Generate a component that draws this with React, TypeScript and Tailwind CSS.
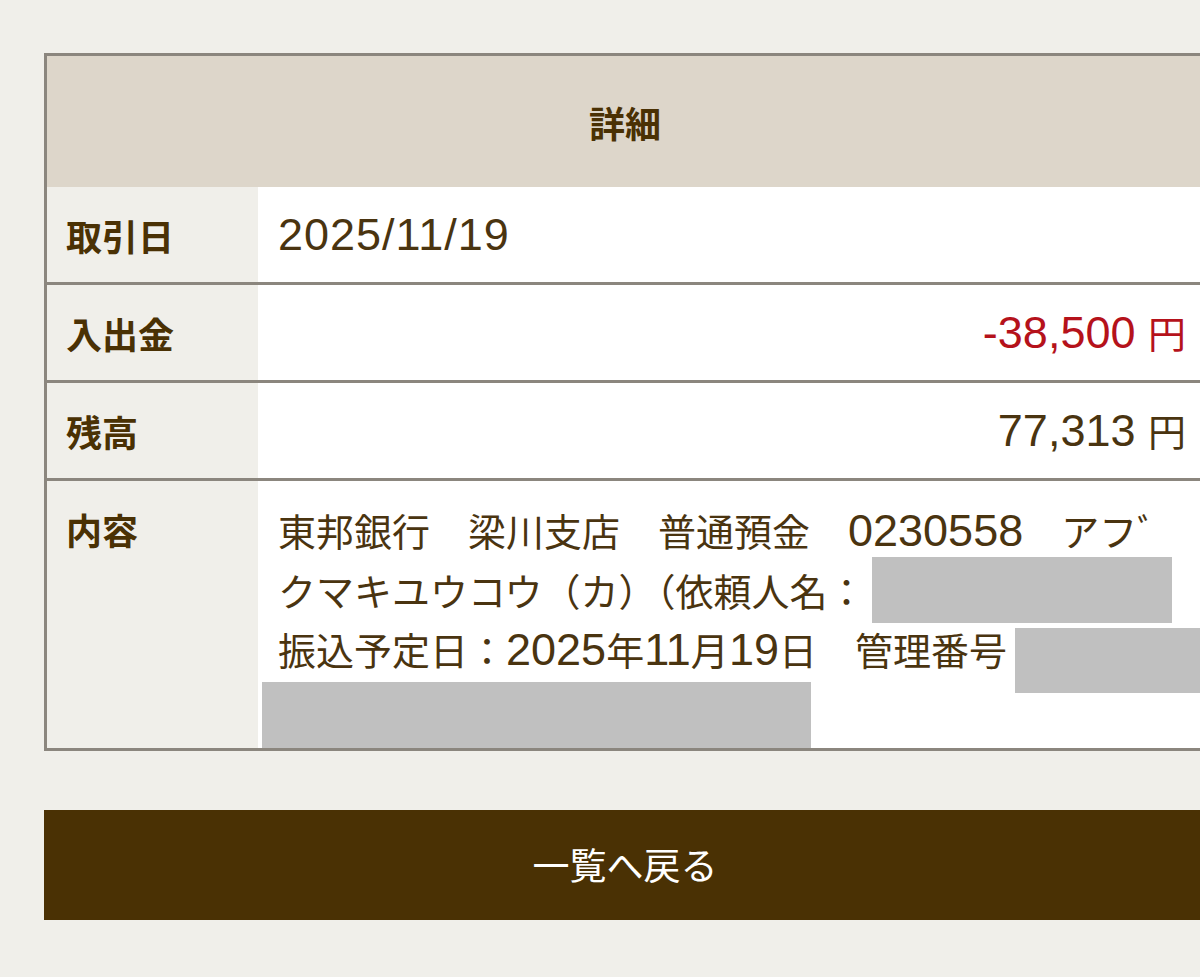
const jp = "font-['Noto_Sans_CJK_JP','Noto_Sans',sans-serif]"
const latin = "font-['Liberation_Sans','Noto_Sans_CJK_JP',sans-serif] text-[45px]"

function L({ children }: { children: React.ReactNode }) {
  return <span className={latin}>{children}</span>
}

function Row({
  label,
  children,
}: {
  label: string
  children: React.ReactNode
}) {
  return (
    <div className="flex h-[98px] border-b-[3px] border-[#8b867e]">
      <div className="w-[211px] shrink-0 flex items-center px-[19px] text-[36px] font-bold text-[#4a3104]">
        {label}
      </div>
      <div className="flex-1 bg-white flex items-center pl-[20px] pr-[17px] text-[38px] text-[#4a3410]">
        {children}
      </div>
    </div>
  )
}

export default function App() {
  return (
    <div className={`w-[1200px] h-[977px] overflow-hidden bg-[#f0efea] pt-[53px] pl-[44px] ${jp}`}>
      <div className="w-[1162px] border-[3px] border-[#8b867e]">
        {/* Header */}
        <div className="h-[131px] bg-[#ddd6ca] flex items-center justify-center text-[36px] font-bold text-[#4a3104]">
          詳細
        </div>

        <Row label="取引日">
          <span className={`${latin} tracking-[1px]`}>2025/11/19</span>
        </Row>
        <Row label="入出金">
          <div className="w-full text-right text-[#b5121b]">
            <L>-38,500 </L>円
          </div>
        </Row>
        <Row label="残高">
          <div className="w-full text-right">
            <L>77,313 </L>円
          </div>
        </Row>

        {/* Content row */}
        <div className="flex h-[267px]">
          <div className="w-[211px] shrink-0 px-[19px] pt-[19px] leading-[59px] text-[36px] font-bold text-[#4a3104]">
            内容
          </div>
          <div className="relative flex-1 bg-white px-[20px] pt-[19px] text-[38px] leading-[59px] text-[#4a3410]">
            <div className="whitespace-nowrap">
              東邦銀行　梁川支店　普通預金　<L>0230558</L>　アフﾞ
            </div>
            <div className="whitespace-nowrap">クマキユウコウ（カ）（依頼人名：</div>
            <div className="whitespace-nowrap">
              振込予定日：<L>2025</L>年<L>11</L>月<L>19</L>日　管理番号
            </div>

            {/* redactions */}
            <div className="absolute left-[614px] top-[76px] w-[300px] h-[66px] bg-[#c0c0c0]" />
            <div className="absolute left-[757px] top-[147px] w-[200px] h-[65px] bg-[#c0c0c0]" />
            <div className="absolute left-[4px] top-[201px] w-[549px] h-[66px] bg-[#c0c0c0]" />
          </div>
        </div>
      </div>

      <button
        type="button"
        className="mt-[59px] w-[1162px] h-[110px] bg-[#4a3104] text-white text-[37px] flex items-center justify-center"
      >
        一覧へ戻る
      </button>
    </div>
  )
}
